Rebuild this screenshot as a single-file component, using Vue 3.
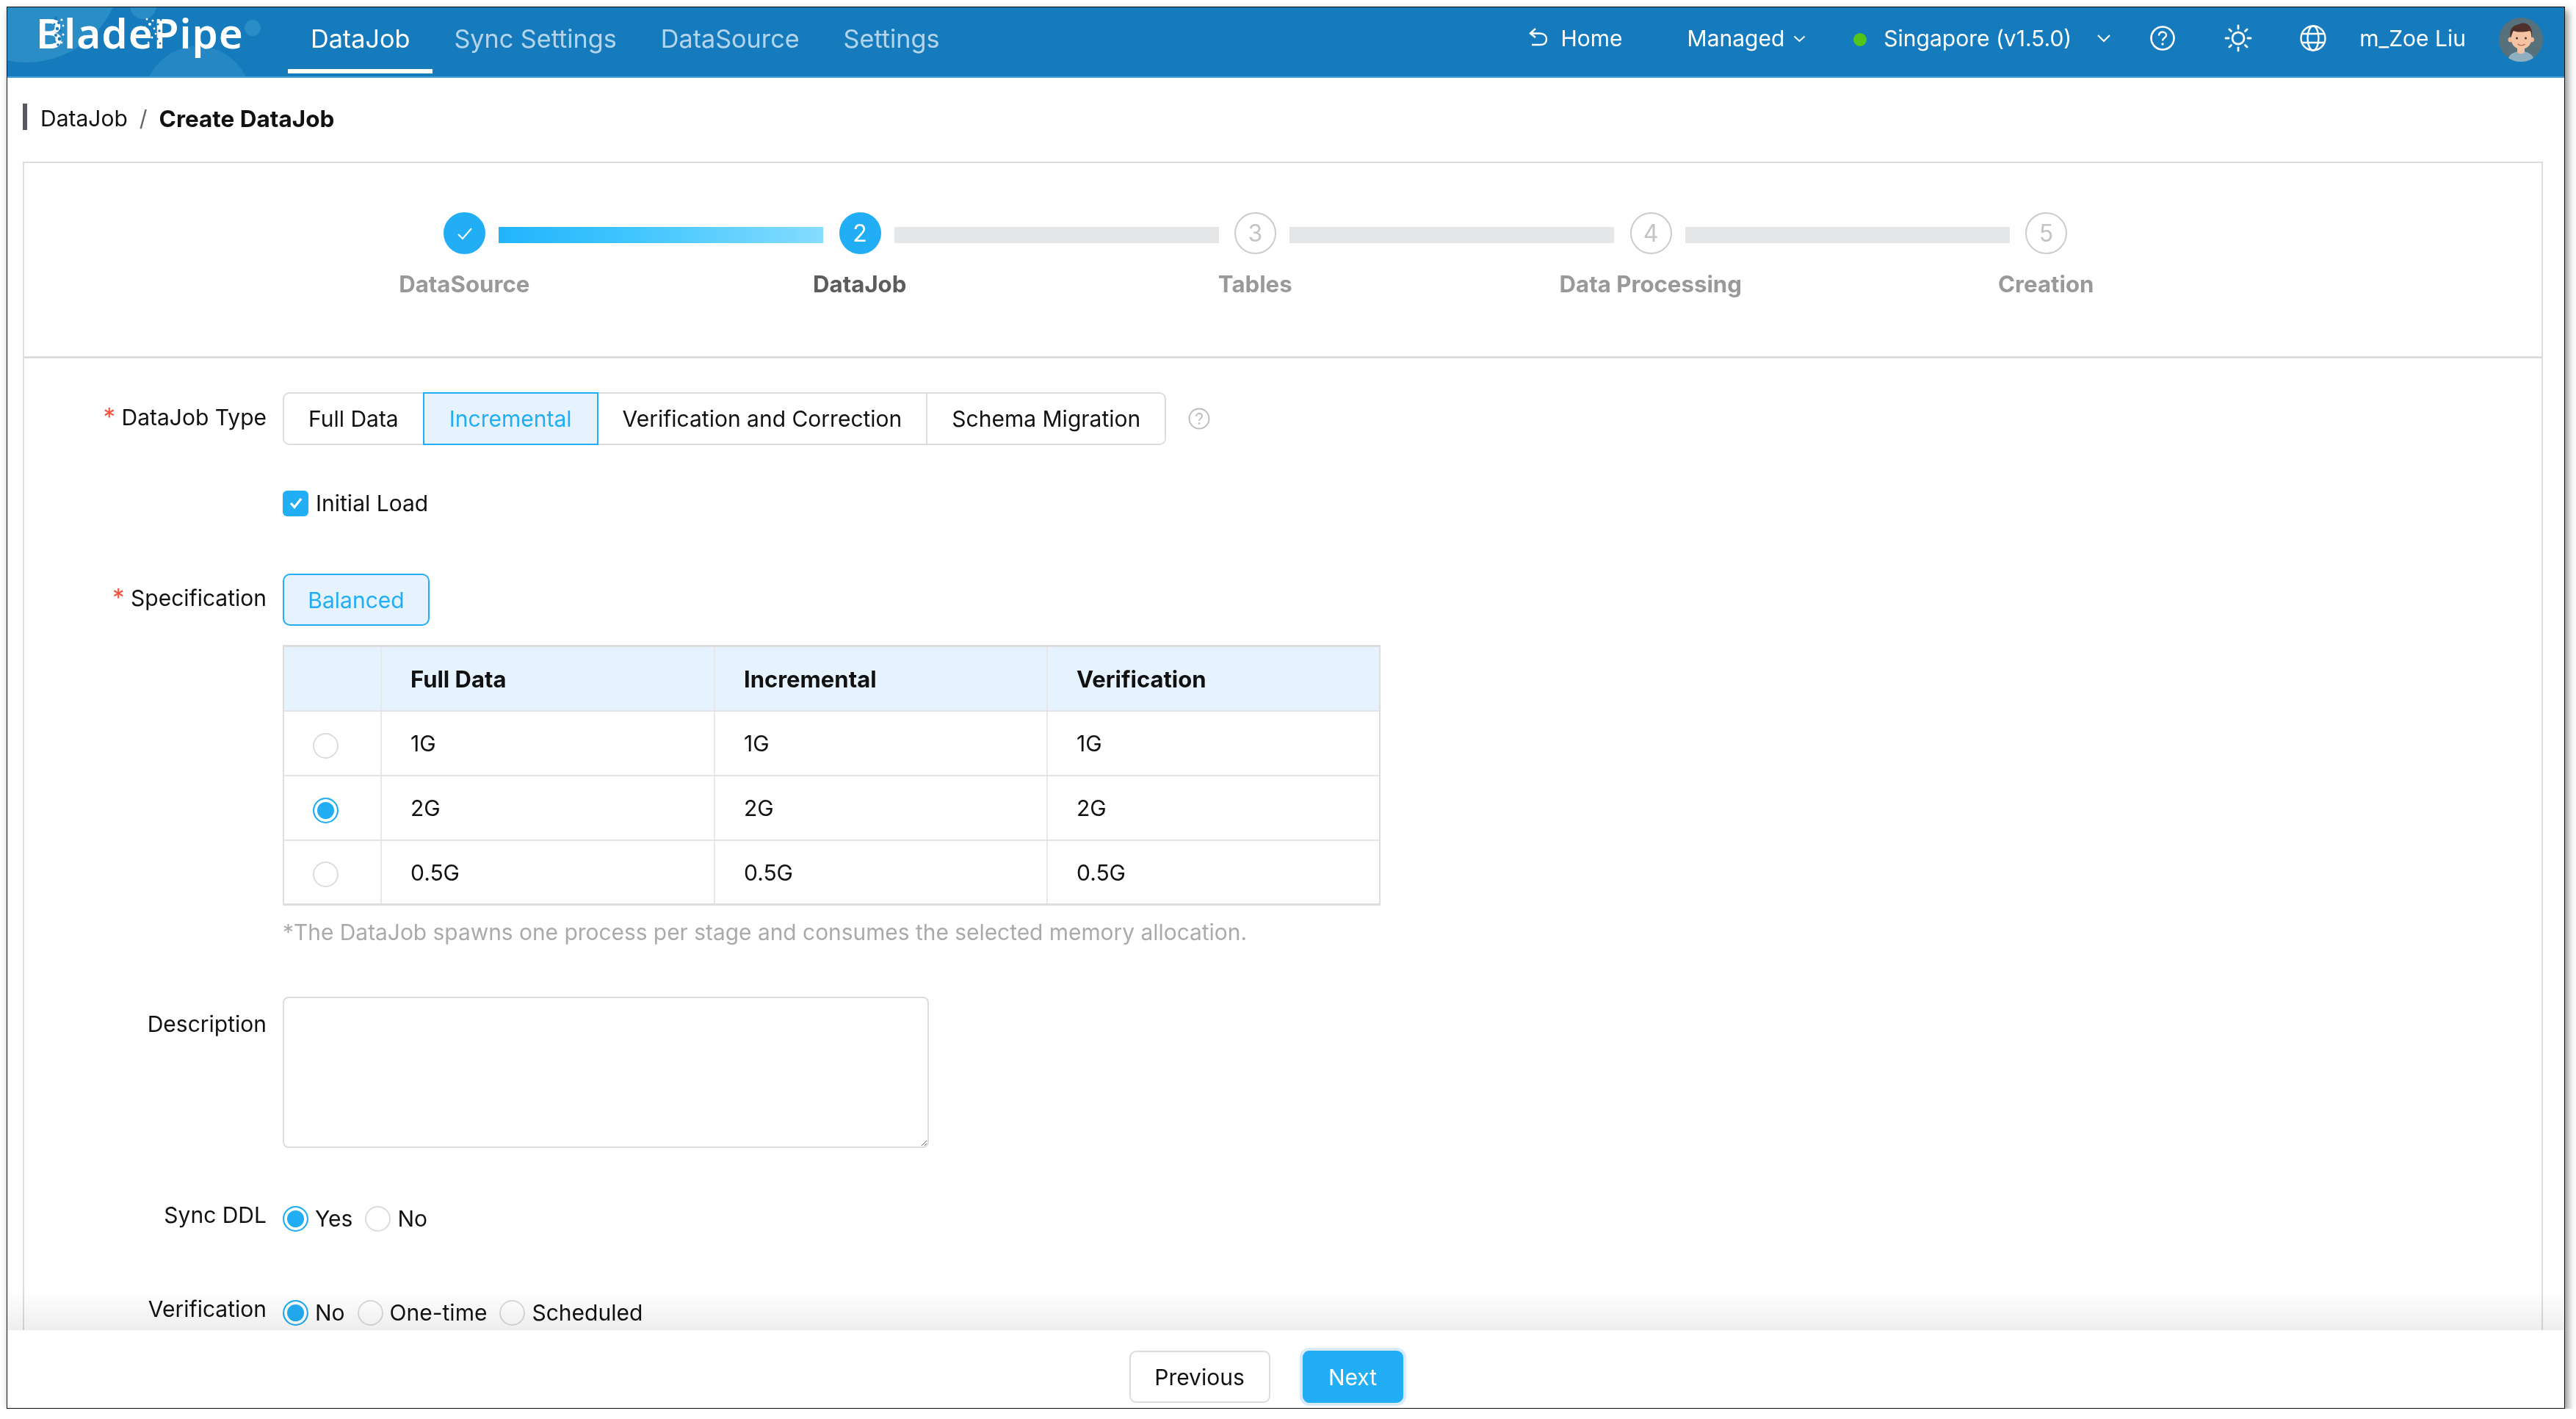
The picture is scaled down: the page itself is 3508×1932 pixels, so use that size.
<template>
  <div class="window">
    <header class="topbar">
      <svg class="blobs" width="400" height="94" viewBox="0 0 400 94">
        <circle cx="26" cy="-55" r="130" fill="#2a8dc6" />
        <circle cx="185" cy="-2" r="18" fill="#2a8dc6" />
        <circle cx="334" cy="28" r="11" fill="#2a8dc6" />
        <circle cx="259" cy="126" r="73" fill="#2587c3" />
      </svg>
      <div class="logo">
        <span>BladePipe</span>
        <svg class="logo-dust" width="290" height="60" viewBox="0 0 290 60">
          <circle v-for="(d, i) in dust" :key="i" :cx="d[0]" :cy="d[1]" :r="d[2]" :fill="d[3]" />
        </svg>
      </div>
      <nav class="nav">
        <a v-for="item in navItems" :key="item" class="nav-item" :class="{ active: item === 'DataJob' }">{{ item }}</a>
      </nav>
      <div class="top-right">
        <span class="home">
          <svg width="28" height="30" viewBox="0 0 28 30" fill="none" stroke="#fff" stroke-width="2.4">
            <path d="M10 2 L3 8.5 L10 14" />
            <path d="M3.5 8.5 H16 C22 8.5 25 12 25 16.5 C25 22 21 24 16 24 H5" />
          </svg>
          Home
        </span>
        <span class="managed">Managed
          <svg class="chev" width="17" height="10" viewBox="0 0 17 10" fill="none" stroke="#fff" stroke-width="2"><path d="M1.5 1.5 L8.5 8 L15.5 1.5" /></svg>
        </span>
        <span class="dot"></span>
        <span class="region">Singapore (v1.5.0)</span>
        <svg class="chev-lg" width="20" height="12" viewBox="0 0 20 12" fill="none" stroke="#fff" stroke-width="2.2"><path d="M2 2 L10 10 L18 2" /></svg>
        <svg class="ic-help" width="36" height="36" viewBox="0 0 36 36" fill="none" stroke="#fff" stroke-width="2.6">
          <circle cx="18" cy="18" r="15.5" />
          <path d="M13 14.5 C13 11 15.5 9.5 18 9.5 C21 9.5 23 11.5 23 14 C23 17.5 18 17.5 18 21.5" stroke-width="2.4" />
          <circle cx="18" cy="26" r="1.7" fill="#fff" stroke="none" />
        </svg>
        <svg class="ic-sun" width="38" height="38" viewBox="0 0 38 38" fill="none" stroke="#fff" stroke-width="2.8" stroke-linecap="round">
          <circle cx="19" cy="19" r="8" />
          <path d="M19 2 V6 M19 32 V36 M2 19 H6 M32 19 H36 M7 7 L9.5 9.5 M28.5 28.5 L31 31 M7 31 L9.5 28.5 M28.5 9.5 L31 7" />
        </svg>
        <svg class="ic-globe" width="38" height="38" viewBox="0 0 38 38" fill="none" stroke="#fff" stroke-width="2.4">
          <circle cx="19" cy="19" r="16.5" />
          <ellipse cx="19" cy="19" rx="7.5" ry="16.5" />
          <path d="M3.5 13 H34.5 M3.5 25 H34.5" />
        </svg>
        <span class="user">m_Zoe Liu</span>
        <svg class="avatar" width="60" height="60" viewBox="0 0 60 60">
          <circle cx="30" cy="30" r="30" fill="#56707c" />
          <path d="M13 55 C15 49 22 46 30 46 C38 46 45 49 47 55 C41 59 36 60 30 60 C24 60 19 59 13 55 Z" fill="#8fb0c0" />
          <path d="M25 40 H35 V47 C33 50 27 50 25 47 Z" fill="#eec0a4" />
          <circle cx="16" cy="30" r="3.5" fill="#f3b999" />
          <circle cx="44.5" cy="30" r="3.5" fill="#f3b999" />
          <path d="M17 20 C17 13 44 13 44 20 V30 C44 38 37 43 30.5 43 C24 43 17 38 17 30 Z" fill="#f6c3a2" />
          <path d="M16 27 C13 14 21 10 28 9 C35 5 47 9 45 27 C44 23 44 19 42 18 C34 20 25 20 20 18 C18 20 18 24 16 27 Z" fill="#50302a" />
          <circle cx="24.5" cy="28" r="1.5" fill="#50302a" />
          <circle cx="36.5" cy="28" r="1.5" fill="#50302a" />
          <path d="M25.5 36 C28 38.5 33 38.5 35.5 36" fill="none" stroke="#b9654e" stroke-width="1.4" />
        </svg>
      </div>
    </header>

    <div class="crumbs">
      <span class="crumb-mark"></span>
      <span>DataJob</span>
      <span class="crumb-sep">/</span>
      <strong>Create DataJob</strong>
    </div>

    <main class="card">
      <section class="steps">
        <div class="step-track">
          <template v-for="(step, i) in steps" :key="step.label">
            <span class="step-dot" :class="step.state">
              <svg v-if="step.state === 'done'" width="24" height="20" viewBox="0 0 24 20" fill="none" stroke="#fff" stroke-width="2"><path d="M3 11 L9 17 L21 3" /></svg>
              <template v-else>{{ i + 1 }}</template>
            </span>
            <span v-if="i < steps.length - 1" class="step-bar" :class="{ filled: step.state === 'done' }"></span>
          </template>
        </div>
        <div class="step-labels">
          <span v-for="step in steps" :key="step.label" :class="{ current: step.state === 'current' }">{{ step.label }}</span>
        </div>
      </section>

      <section class="form">
        <div class="row row-type">
          <label class="label"><i>*</i> DataJob Type</label>
          <div class="segment">
            <span v-for="t in jobTypes" :key="t" :class="{ on: t === 'Incremental' }">{{ t }}</span>
          </div>
          <svg class="tip" width="30" height="30" viewBox="0 0 30 30" fill="none" stroke="#bbb" stroke-width="1.8">
            <circle cx="15" cy="15" r="13.5" />
            <path d="M11 12 C11 9.5 13 8 15 8 C17.5 8 19 9.8 19 11.8 C19 14.5 15 14.8 15 18" />
            <circle cx="15" cy="21.5" r="1.3" fill="#bbb" stroke="none" />
          </svg>
        </div>

        <div class="row row-check">
          <span class="check">
            <svg width="22" height="20" viewBox="0 0 22 20" fill="none" stroke="#fff" stroke-width="3.2"><path d="M4 10 L9 15.5 L18 4" /></svg>
          </span>
          <span>Initial Load</span>
        </div>

        <div class="row row-spec">
          <label class="label"><i>*</i> Specification</label>
          <span class="spec-btn">Balanced</span>
        </div>

        <div class="spec-table">
          <div class="tr head">
            <div class="td pick"></div>
            <div v-for="h in specCols" :key="h" class="td">{{ h }}</div>
          </div>
          <div v-for="mem in specRows" :key="mem" class="tr">
            <div class="td pick"><span class="radio" :class="{ on: mem === '2G' }"></span></div>
            <div v-for="h in specCols" :key="h" class="td">{{ mem }}</div>
          </div>
        </div>
        <p class="note">*The DataJob spawns one process per stage and consumes the selected memory allocation.</p>

        <div class="row row-desc">
          <label class="label">Description</label>
          <textarea class="desc"></textarea>
        </div>

        <div class="row row-ddl">
          <label class="label">Sync DDL</label>
          <span class="opt"><span class="radio on"></span>Yes</span>
          <span class="opt"><span class="radio"></span>No</span>
        </div>

        <div class="row row-verify">
          <label class="label">Verification</label>
          <span class="opt"><span class="radio on"></span>No</span>
          <span class="opt"><span class="radio"></span>One-time</span>
          <span class="opt"><span class="radio"></span>Scheduled</span>
        </div>
      </section>
    </main>

    <footer class="actions">
      <div class="fade"></div>
      <button class="btn">Previous</button>
      <button class="btn primary">Next</button>
    </footer>
  </div>
</template>

<script setup>
const navItems = ['DataJob', 'Sync Settings', 'DataSource', 'Settings']

const steps = [
  { label: 'DataSource', state: 'done' },
  { label: 'DataJob', state: 'current' },
  { label: 'Tables', state: 'todo' },
  { label: 'Data Processing', state: 'todo' },
  { label: 'Creation', state: 'todo' },
]

const jobTypes = ['Full Data', 'Incremental', 'Verification and Correction', 'Schema Migration']
const specCols = ['Full Data', 'Incremental', 'Verification']
const specRows = ['1G', '2G', '0.5G']

// particles over the logo, blue ones eat into the letter, white ones fly off it
const dust = [
  [27, 10, 2.4, '#157bbd'], [31, 16, 2, '#157bbd'], [25, 18, 1.5, '#157bbd'], [29, 24, 2.2, '#157bbd'],
  [33, 27, 1.8, '#157bbd'], [27, 33, 2, '#157bbd'], [32, 38, 2.4, '#157bbd'], [26, 42, 1.6, '#157bbd'],
  [30, 46, 1.8, '#157bbd'], [35, 12, 1.6, '#fff'], [37, 20, 1.4, '#fff'], [37, 32, 1.5, '#fff'], [35, 43, 1.4, '#fff'],
  [151, 11, 1.5, '#fff'], [155, 18, 2, '#fff'], [148, 22, 1.3, '#fff'], [159, 13, 1.5, '#fff'], [153, 28, 1.5, '#fff'],
  [161, 24, 1.4, '#fff'], [150, 34, 1.8, '#fff'], [158, 36, 1.5, '#fff'], [163, 31, 1.3, '#fff'], [153, 43, 1.3, '#fff'],
  [166, 18, 1.6, '#157bbd'], [168, 27, 1.8, '#157bbd'], [165, 38, 1.6, '#157bbd'], [170, 12, 1.4, '#157bbd'], [169, 44, 1.5, '#157bbd'],
]
</script>

<style scoped>
.window {
  height: 1909px;
  margin: 9px 15px 0 9px;
  border: 1px solid #111;
  box-shadow: 4px 5px 10px rgba(0, 0, 0, 0.45);
  background: #fff;
  display: flex;
  flex-direction: column;
  overflow: hidden;
  font-family: Inter, "Liberation Sans", sans-serif;
  font-size: 30px;
  color: #111;
  box-sizing: border-box;
}

/* top bar */
.topbar {
  position: relative;
  height: 94px;
  flex-shrink: 0;
  background: #157bbd;
  border-bottom: 2px solid #4a9fd8;
  display: flex;
  align-items: center;
  color: #fff;
  box-sizing: content-box;
}
.blobs {
  position: absolute;
  left: 0;
  top: 0;
}
.logo {
  position: relative;
  margin-left: 39px;
  width: 300px;
  white-space: nowrap;
  font-family: "Noto Sans", sans-serif;
  font-weight: 600;
  font-size: 56.5px;
  letter-spacing: 1px;
  line-height: 60px;
  margin-top: -24px;
}
.logo-dust {
  position: absolute;
  left: 0;
  top: 0;
}
.nav {
  display: flex;
  margin-left: 43px;
  height: 100%;
}
.nav-item {
  padding: 0 31px;
  margin-right: -2px;
  display: flex;
  align-items: center;
  height: 90px;
  color: rgba(255, 255, 255, 0.68);
  font-size: 34.2px;
  box-sizing: border-box;
  border-bottom: 6px solid transparent;
}
.nav-item.active {
  color: #fff;
  border-bottom-color: #fff;
}
.top-right {
  margin-left: auto;
  display: flex;
  align-items: center;
  height: 100%;
  padding-bottom: 10px;
  box-sizing: border-box;
}
.home {
  display: flex;
  align-items: center;
  gap: 16px;
}
.managed {
  display: flex;
  align-items: center;
  gap: 12px;
  margin-left: 88px;
}
.chev {
  margin-top: 2px;
}
.dot {
  width: 18px;
  height: 18px;
  border-radius: 50%;
  background: #52c41a;
  margin-left: 65px;
  margin-top: 4px;
}
.region {
  margin-left: 23px;
}
.chev-lg {
  margin-left: 34px;
}
.ic-help {
  margin-left: 52px;
}
.ic-sun {
  margin-left: 66px;
}
.ic-globe {
  margin-left: 64px;
}
.user {
  margin-left: 44px;
}
.avatar {
  margin-left: 45px;
  margin-right: 29px;
  margin-top: 4px;
}

/* breadcrumb */
.crumbs {
  height: 114px;
  flex-shrink: 0;
  display: flex;
  align-items: center;
  padding-left: 21px;
  padding-bottom: 4px;
  box-sizing: border-box;
}
.crumb-mark {
  width: 6px;
  height: 36px;
  background: #55595f;
  margin-right: 18px;
  margin-top: -4px;
}
.crumb-sep {
  margin: 0 16px;
  color: #666;
}
.crumbs strong {
  font-weight: 700;
  font-size: 31.5px;
}

/* main card */
.card {
  position: relative;
  flex: 1;
  min-height: 0;
  margin: 0 29px 0 21px;
  border: 2px solid #ddd;
  border-bottom: none;
  overflow: hidden;
}

/* steps */
.steps {
  height: 266px;
  border-bottom: 3px solid #ddd;
  box-sizing: border-box;
  padding-top: 67px;
}
.step-track {
  display: flex;
  align-items: center;
  padding-left: 571px;
}
.step-dot {
  width: 57px;
  height: 57px;
  flex-shrink: 0;
  border-radius: 50%;
  box-sizing: border-box;
  border: 2px solid #ccc;
  color: #c4c4c4;
  display: flex;
  align-items: center;
  justify-content: center;
  font-size: 32px;
}
.step-dot.done,
.step-dot.current {
  background: #22aef5;
  border-color: #22aef5;
  color: #fff;
}
.step-bar {
  width: 442px;
  height: 22px;
  margin: 4px 21.5px 0 18px;
  background: #e5e6e8;
}
.step-bar.filled {
  background: linear-gradient(90deg, #22b4fb, #3fc5ff 40%, #85dcff);
}
.step-labels {
  display: grid;
  grid-template-columns: repeat(5, 538.5px);
  margin-top: 21px;
  margin-left: 330px;
  text-align: center;
  color: #999;
  font-weight: 700;
  font-size: 31.2px;
  line-height: 40px;
}
.step-labels .current {
  color: #5c5c5c;
}

/* form */
.form {
  padding-top: 46px;
}
.row {
  display: flex;
  align-items: flex-start;
  padding-left: 352px;
  position: relative;
}
.label {
  position: absolute;
  right: calc(100% - 330px);
  white-space: nowrap;
  line-height: 40px;
}
.label i {
  color: #f5533d;
  font-style: normal;
  font-size: 33px;
}
.segment {
  display: flex;
  height: 72px;
  box-sizing: border-box;
  border: 2px solid #ddd;
  border-radius: 9px;
}
.segment span {
  display: flex;
  align-items: center;
  padding: 0 33px;
  border-left: 2px solid #ddd;
  margin-top: -2px;
  margin-bottom: -2px;
}
.segment span:first-child {
  border-left: none;
}
.segment span.on {
  color: #22aef5;
  background: #e6f2fd;
  border: 2px solid #22aef5;
  padding: 0 34px;
}
.segment span.on + span {
  border-left: none;
}
.tip {
  margin: 21px 0 0 30px;
}
.row-type .label {
  top: 13px;
}
.row-check {
  margin-top: 61px;
  align-items: center;
  gap: 10px;
  height: 36px;
}
.check {
  width: 35px;
  height: 35px;
  border-radius: 6px;
  background: #22aef5;
  display: flex;
  align-items: center;
  justify-content: center;
}
.row-spec {
  margin-top: 78px;
}
.row-spec .label {
  top: 12px;
}
.spec-btn {
  width: 200px;
  height: 71px;
  box-sizing: border-box;
  border: 2px solid #22aef5;
  border-radius: 10px;
  background: #e6f2fd;
  color: #22aef5;
  display: flex;
  align-items: center;
  justify-content: center;
}
.spec-table {
  margin: 26px 0 0 352px;
  width: 1495px;
  border: 2px solid #ddd;
  border-top-width: 3px;
  border-bottom-width: 3px;
  box-sizing: border-box;
}
.tr {
  display: grid;
  grid-template-columns: 131px 454px 453px 1fr;
  height: 88px;
  border-bottom: 2px solid #e4e4e8;
  box-sizing: border-box;
}
.tr:last-child {
  border-bottom: none;
  height: 85px;
}
.tr.head {
  background: #e6f2fd;
  font-weight: 700;
  font-size: 31px;
  height: 88px;
}
.td {
  display: flex;
  align-items: center;
  padding-left: 39px;
  border-left: 2px solid #e8e8e8;
  box-sizing: border-box;
}
.td.pick {
  padding: 6px 0 0 39px;
  border-left: none;
}
.radio {
  width: 35px;
  height: 35px;
  box-sizing: border-box;
  border-radius: 50%;
  border: 2px solid #dcdcdc;
  background: #fff;
  flex-shrink: 0;
}
.radio.on {
  border-color: #22aef5;
  background: #22aef5;
  box-shadow: inset 0 0 0 4px #fff;
}
.note {
  margin: 16px 0 0 352px;
  color: #aaa;
  line-height: 40px;
  font-size: 29.9px;
}
.row-desc {
  margin-top: 68px;
}
.row-desc .label {
  top: 17px;
}
.desc {
  width: 880px;
  height: 206px;
  box-sizing: border-box;
  border: 2px solid #ddd;
  border-radius: 8px;
  background: #fff;
  outline: none;
  display: block;
  margin: 0;
  resize: both;
}
.opt {
  display: flex;
  align-items: center;
  gap: 9px;
  margin-right: 17px;
  height: 36px;
  line-height: 32px;
}
.row-ddl {
  margin-top: 78px;
}
.row-ddl .label {
  top: -7px;
}
.row-verify {
  margin-top: 92px;
}
.row-verify .label {
  top: -7px;
}

/* footer buttons */
.actions {
  position: relative;
  height: 106px;
  flex-shrink: 0;
  display: flex;
  justify-content: center;
  gap: 44px;
  padding-top: 28px;
  padding-right: 54px;
  box-sizing: border-box;
  background: #fff;
}
.fade {
  position: absolute;
  left: 0;
  right: 0;
  bottom: 100%;
  height: 54px;
  background: linear-gradient(#fff, #eeeeee);
  mix-blend-mode: multiply;
  pointer-events: none;
}
.btn {
  height: 71px;
  width: 192px;
  border: 2px solid #dcdce0;
  border-radius: 9px;
  background: #fff;
  font: inherit;
  color: #111;
  padding: 0;
}
.btn.primary {
  width: 137px;
  background: #22aef5;
  border-color: #22aef5;
  color: #fff;
  box-shadow: 0 0 0 4px #d9ebfb;
}
</style>

<style>
html,
body {
  background: #fff;
}
</style>
